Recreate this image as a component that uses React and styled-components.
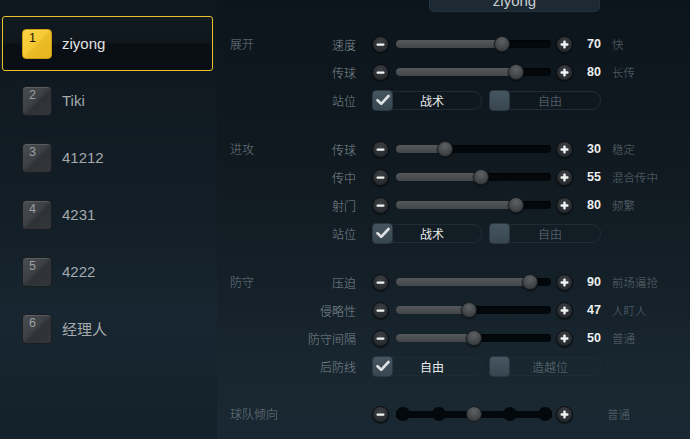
import React from "react";
import styled, { createGlobalStyle } from "styled-components";

const GlobalStyle = createGlobalStyle`
  html, body {
    margin: 0;
    padding: 0;
    background: #0e161d;
  }
  * {
    box-sizing: border-box;
  }
`;

const Screen = styled.div`
  width: 690px;
  height: 439px;
  display: flex;
  overflow: hidden;
  font-family: "Liberation Sans", "Noto Sans CJK SC", sans-serif;
`;

const Sidebar = styled.div`
  width: 217px;
  flex-shrink: 0;
  padding: 16px 4px 0 2px;
  display: flex;
  flex-direction: column;
  gap: 2px;
  background: linear-gradient(
    180deg,
    #0f171e 0%,
    #121d25 45%,
    #172630 72%,
    #13212a 100%
  );
`;

const Item = styled.div`
  height: 55px;
  display: flex;
  align-items: center;
  padding-left: 19px;
  border: 1.5px solid ${p => (p.$active ? "#e9c22b" : "transparent")};
  border-radius: 3px;
  background: ${p =>
    p.$active
      ? "linear-gradient(180deg, #111a20 0%, #0f171d 48%, #090f14 52%, #080e13 100%)"
      : "transparent"};
`;

const Badge = styled.div`
  width: 30px;
  height: 30px;
  border-radius: 4px;
  padding: 2px 0 0 6px;
  font-size: 12.5px;
  line-height: 13px;
  color: ${p => (p.$active ? "#1b1606" : "#9a9fa3")};
  border: 1px solid ${p => (p.$active ? "#c99b12" : "#1b1e21")};
  background: ${p =>
    p.$active
      ? "linear-gradient(135deg, #f9d443 0%, #f4c934 45%, #ebbb26 55%, #e8b520 100%)"
      : "linear-gradient(135deg, #4a4e53 0%, #3d4145 45%, #2e3135 55%, #33373b 100%)"};
  box-shadow: inset 0 1px 0 rgba(255, 255, 255, 0.12);
`;

const Name = styled.div`
  margin-left: 10px;
  font-size: 15px;
  color: ${p => (p.$active ? "#e0e2e3" : "#a3a9ad")};
`;

const Main = styled.div`
  flex: 1;
  display: flex;
  flex-direction: column;
  padding-left: 13px;
  background: linear-gradient(
    180deg,
    #0d151c 0%,
    #10191f 35%,
    #131e26 58%,
    #18262f 82%,
    #192832 100%
  );
`;

const Tab = styled.div`
  width: 171px;
  height: 22px;
  margin: -10px 0 0 199px;
  border-radius: 5px;
  background: #1d2a33;
  border: 1px solid #24323c;
  color: #c9ced1;
  font-size: 15px;
  line-height: 20px;
  text-align: center;
`;

const Section = styled.div`
  display: flex;
  margin-top: ${p => p.$top}px;
`;

const Title = styled.div`
  width: 56px;
  flex-shrink: 0;
  font-family: "Noto Sans CJK SC", sans-serif;
  font-size: 12px;
  font-weight: 300;
  line-height: 28px;
  color: #6e7b84;
  white-space: nowrap;
`;

const Rows = styled.div`
  display: flex;
  flex-direction: column;
`;

const Row = styled.div`
  height: 28px;
  display: flex;
  align-items: center;
`;

const Label = styled.div`
  width: 70px;
  margin-right: 16px;
  text-align: right;
  font-family: "Noto Sans CJK SC", sans-serif;
  font-size: 12px;
  font-weight: 300;
  color: #7f8b92;
`;

const Round = styled.div`
  width: 17px;
  height: 17px;
  flex-shrink: 0;
  border-radius: 50%;
  display: flex;
  align-items: center;
  justify-content: center;
  background: radial-gradient(circle at 50% 35%, #3d4145 0%, #2a2d31 60%, #1d2023 100%);
  border: 1px solid #0a0d10;
  box-shadow: 0 1px 1px rgba(0, 0, 0, 0.5);
  margin-left: ${p => p.$ml || 0}px;
`;

const Track = styled.div`
  position: relative;
  width: 155px;
  height: 8px;
  margin-left: 7px;
  border-radius: 4px;
  background: #03080c;
  box-shadow: inset 0 1px 1px rgba(0, 0, 0, 0.6);
`;

const Fill = styled.div`
  height: 100%;
  border-radius: 4px;
  background: linear-gradient(180deg, #56595c 0%, #434649 100%);
`;

const Thumb = styled.div`
  position: absolute;
  top: 50%;
  width: 16px;
  height: 16px;
  margin: -8px 0 0 -8px;
  border-radius: 50%;
  background: radial-gradient(circle at 50% 30%, #5e6164 0%, #45484b 55%, #303336 100%);
  border: 1px solid #1b1e21;
  box-shadow: 0 1px 2px rgba(0, 0, 0, 0.6);
`;

const Value = styled.div`
  width: 28px;
  text-align: right;
  font-size: 12.5px;
  font-weight: 700;
  color: #eceeef;
`;

const Desc = styled.div`
  margin-left: ${p => p.$ml || 11}px;
  font-family: "Noto Sans CJK SC", sans-serif;
  font-size: 11.5px;
  font-weight: 300;
  color: #5c6971;
  white-space: nowrap;
`;

const Steps = styled.div`
  width: 156px;
  height: 16px;
  margin-left: 7px;
  display: flex;
  align-items: center;
  justify-content: space-between;
  background: linear-gradient(#03080c, #03080c) center / 100% 7px no-repeat;
`;

const Dot = styled.div`
  width: ${p => (p.$on ? 16 : 14)}px;
  height: ${p => (p.$on ? 16 : 14)}px;
  margin: 0 ${p => (p.$on ? -1 : 0)}px;
  border-radius: 50%;
  background: ${p =>
    p.$on
      ? "radial-gradient(circle at 50% 30%, #5e6164 0%, #45484b 55%, #303336 100%)"
      : "#03080c"};
  border: ${p => (p.$on ? "1px solid #1b1e21" : "none")};
`;

const Toggles = styled.div`
  display: flex;
  gap: 7px;
`;

const Pill = styled.div`
  width: ${p => p.$w}px;
  height: 19px;
  display: flex;
  align-items: center;
  border: 1px solid #202c35;
  border-radius: 9px;
`;

const Box = styled.div`
  width: 21px;
  height: 21px;
  flex-shrink: 0;
  margin-left: -1px;
  border-radius: 4px;
  display: flex;
  align-items: center;
  justify-content: center;
  background: linear-gradient(180deg, #465661 0%, #37464f 100%);
  border: 1px solid #2a3740;
`;

const PillText = styled.div`
  flex: 1;
  padding-right: 10px;
  text-align: center;
  font-family: "Noto Sans CJK SC", sans-serif;
  font-size: 12px;
  font-weight: ${p => (p.$on ? 400 : 300)};
  color: ${p => (p.$on ? "#e8eaeb" : "#68757e")};
`;

const Minus = () => (
  <Round>
    <svg width="9" height="9" viewBox="0 0 9 9">
      <rect x="0.5" y="3.4" width="8" height="2.4" rx="1" fill="#f2f2f2" />
    </svg>
  </Round>
);

const Plus = ({ ml }) => (
  <Round $ml={ml}>
    <svg width="9" height="9" viewBox="0 0 9 9">
      <rect x="0.5" y="3.3" width="8" height="2.4" rx="1" fill="#f2f2f2" />
      <rect x="3.3" y="0.5" width="2.4" height="8" rx="1" fill="#f2f2f2" />
    </svg>
  </Round>
);

const Check = () => (
  <svg width="14" height="12" viewBox="0 0 14 12">
    <path
      d="M1.5 6.2 L5.2 9.8 L12.5 2"
      fill="none"
      stroke="#dfe2e4"
      strokeWidth="2.6"
      strokeLinecap="round"
      strokeLinejoin="round"
    />
  </svg>
);

const Slider = ({ label, value, desc }) => {
  const pos = 7 + (value / 100) * 141;
  return (
    <Row>
      <Label>{label}</Label>
      <Minus />
      <Track>
        <Fill style={{ width: pos }} />
        <Thumb style={{ left: pos }} />
      </Track>
      <Plus ml={5} />
      <Value>{value}</Value>
      <Desc>{desc}</Desc>
    </Row>
  );
};

const Choice = ({ label, options, selected }) => (
  <Row>
    <Label>{label}</Label>
    <Toggles>
      {options.map((o, i) => (
        <Pill key={o} $w={i === 0 ? 110 : 112}>
          <Box>{i === selected && <Check />}</Box>
          <PillText $on={i === selected}>{o}</PillText>
        </Pill>
      ))}
    </Toggles>
  </Row>
);

const players = [
  { n: 1, name: "ziyong" },
  { n: 2, name: "Tiki" },
  { n: 3, name: "41212" },
  { n: 4, name: "4231" },
  { n: 5, name: "4222" },
  { n: 6, name: "经理人" },
];

const App = () => {
  return (
    <>
      <GlobalStyle />
      <Screen>
        <Sidebar>
          {players.map(p => (
            <Item key={p.n} $active={p.n === 1}>
              <Badge $active={p.n === 1}>{p.n}</Badge>
              <Name $active={p.n === 1}>{p.name}</Name>
            </Item>
          ))}
        </Sidebar>
        <Main>
          <Tab>ziyong</Tab>
          <Section $top={18}>
            <Title>展开</Title>
            <Rows>
              <Slider label="速度" value={70} desc="快" />
              <Slider label="传球" value={80} desc="长传" />
              <Choice label="站位" options={["战术", "自由"]} selected={0} />
            </Rows>
          </Section>
          <Section $top={21}>
            <Title>进攻</Title>
            <Rows>
              <Slider label="传球" value={30} desc="稳定" />
              <Slider label="传中" value={55} desc="混合传中" />
              <Slider label="射门" value={80} desc="频繁" />
              <Choice label="站位" options={["战术", "自由"]} selected={0} />
            </Rows>
          </Section>
          <Section $top={21}>
            <Title>防守</Title>
            <Rows>
              <Slider label="压迫" value={90} desc="前场逼抢" />
              <Slider label="侵略性" value={47} desc="人盯人" />
              <Slider label="防守间隔" value={50} desc="普通" />
              <Choice label="后防线" options={["自由", "造越位"]} selected={0} />
            </Rows>
          </Section>
          <Section $top={20}>
            <Title>球队倾向</Title>
            <Rows>
              <Row>
                <Label />
                <Minus />
                <Steps>
                  {[0, 1, 2, 3, 4].map(i => (
                    <Dot key={i} $on={i === 2} />
                  ))}
                </Steps>
                <Plus ml={4} />
                <Desc $ml={34}>普通</Desc>
              </Row>
            </Rows>
          </Section>
        </Main>
      </Screen>
    </>
  );
};

export default App;
